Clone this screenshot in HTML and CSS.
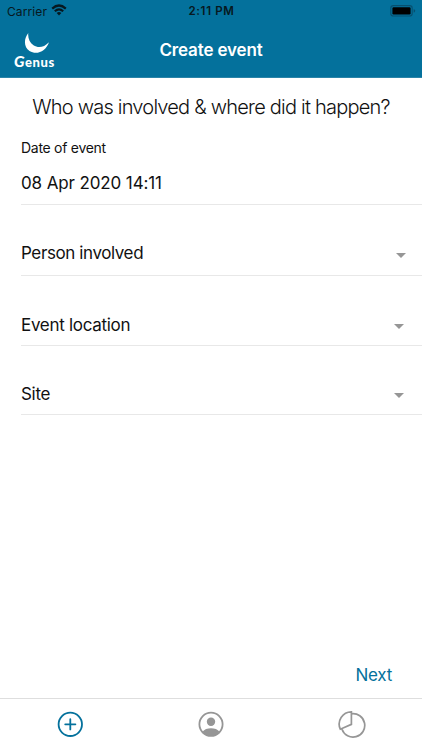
FILE: index.html
```html
<!DOCTYPE html>
<html lang="en">
<head>
<meta charset="utf-8">
<title>Create event</title>
<link rel="stylesheet" href="styles.css">
</head>
<body>
<div class="app">
  <header class="header">
    <div class="status">
      <div class="carrier"><span>Carrier</span>
        <svg width="16" height="12" viewBox="0 0 16 12" fill="none" stroke="#071820" stroke-width="2.2"><path d="M1.2 4.6Q8-1.6 14.8 4.6M3.8 7.3Q8 3.5 12.2 7.3"/><path d="M5.7 9Q8 7 10.3 9L8 11.4Z" fill="#071820" stroke="none"/></svg>
      </div>
      <span class="time">2:11 PM</span>
      <svg class="battery" width="26" height="12" viewBox="0 0 26 12"><rect x=".8" y=".6" width="21.4" height="10.4" rx="2.6" fill="none" stroke="#07506f" stroke-width="1.1"/><rect x="2.4" y="2.2" width="18.2" height="7.2" rx="1.2" fill="#000"/><path d="M23.7 4v3.7q1.5-.5 1.5-1.85T23.7 4Z" fill="#07506f"/></svg>
    </div>
    <div class="titlebar">
      <div class="logo">
        <svg width="26" height="21" viewBox="0 0 26 21"><path d="M4.3 0C-.5 6-.2 14.500 5.500 18C13 22.500 22 18 25 9.200C20 14.300 14.500 15.600 9.500 12.300C5.500 9.700 3.700 5 4.300 0Z" fill="#fff"/></svg>
        <span class="brand"><span class="cap">G</span>enus</span>
      </div>
      <h1 class="title">Create event</h1>
    </div>
  </header>
  <main class="main">
    <h2 class="question">Who was involved &amp; where did it happen?</h2>
    <div class="date">
      <div class="label">Date of event</div>
      <div class="value">08 Apr 2020 14:11</div>
    </div>
    <div class="field person"><span>Person involved</span><svg class="arrow" width="10" height="5" viewBox="0 0 10 5"><path d="M0 0H10L5 5Z"/></svg></div>
    <div class="field location"><span>Event location</span><svg class="arrow" width="10" height="5" viewBox="0 0 10 5"><path d="M0 0H10L5 5Z"/></svg></div>
    <div class="field site"><span>Site</span><svg class="arrow" width="10" height="5" viewBox="0 0 10 5"><path d="M0 0H10L5 5Z"/></svg></div>
    <div class="next">Next</div>
  </main>
  <nav class="tabs">
    <svg width="28" height="28" viewBox="0 0 28 28" fill="none" stroke="#04719c" stroke-width="1.8" stroke-linecap="round"><circle cx="14.300" cy="14.300" r="11.700"/><path d="M14.300 9.200v10.200M9.200 14.300h10.200"/></svg>
    <svg width="28" height="28" viewBox="0 0 28 28"><circle cx="14" cy="14.300" r="11.600" fill="none" stroke="#969696" stroke-width="1.8"/><circle cx="14" cy="11.800" r="4.200" fill="#969696"/><path d="M5.700 21.500C8.500 17 19.500 17 22.300 21.500Q19 25.900 14 25.900T5.700 21.500Z" fill="#969696"/></svg>
    <svg width="28" height="28" viewBox="0 0 28 28" fill="none" stroke="#969696" stroke-width="1.700"><path d="M13.400 1.800V14.400L2.300 19.200A12.300 12.300 0 0 1 13.400 1.800ZM13.400 3.800A11.700 11.700 0 1 1 4 19.200"/></svg>
  </nav>
</div>
</body>
</html>
```
FILE: styles.css
```css
* { box-sizing: border-box; }
body { margin: 0; background: #fff; color: #111; font-family: Inter, "Liberation Sans", sans-serif; }
.app { width: 422px; height: 750px; display: flex; flex-direction: column; overflow: hidden; }
h1, h2 { margin: 0; }
svg { display: block; }
.header { height: 78px; background: #04719c; border-bottom: 1px solid #2b84a8; }
.status { height: 22px; display: grid; grid-template-columns: 1fr auto 1fr; align-items: center; padding: 0 6px 0 7px; color: #071820; font-size: 12px; }
.carrier { display: flex; align-items: center; gap: 4px; letter-spacing: .1px; }
.carrier svg { margin-top: -2px; }
.time { font-size: 11.5px; font-weight: 600; letter-spacing: .65px; }
.battery { justify-self: end; margin-top: -1px; }
.titlebar { height: 55px; display: grid; grid-template-columns: 1fr auto 1fr; }
.logo { padding: 11px 0 0 14px; color: #fff; }
.logo svg { margin-left: 10px; }
.brand { display: block; margin-top: -1px; height: 16px; line-height: 16px; font-family: Lato, sans-serif; font-size: 13px; font-weight: 900; letter-spacing: .55px; white-space: nowrap; }
.cap { font-size: 15.5px; font-style: italic; }
.title { color: #fff; font-size: 17px; line-height: 56px; font-weight: 600; letter-spacing: -.15px; white-space: nowrap; }
.main { flex: 1; display: flex; flex-direction: column; }
.question { height: 58px; line-height: 58px; text-align: center; font-size: 20px; font-weight: 300; letter-spacing: -.78px; white-space: nowrap; }
.date { height: 69px; margin-left: 21px; border-bottom: 1px solid #e8e8e8; }
.label { font-size: 14px; line-height: 24px; letter-spacing: -.28px; }
.value { font-size: 17px; line-height: 46px; letter-spacing: -.12px; }
.field { margin-left: 21px; border-bottom: 1px solid #e8e8e8; display: flex; align-items: flex-end; justify-content: space-between; font-size: 17px; line-height: 24px; letter-spacing: -.3px; padding: 0 18px 8px 0; }
.person { height: 71px; padding: 0 16px 10px 0; letter-spacing: -.4px; }
.location { height: 70px; }
.site { height: 69px; }
.arrow { margin-bottom: 8px; fill: #969696; }
.person .arrow { margin-bottom: 7px; }
.next { margin: auto 30px 11px auto; color: #04719c; font-size: 17px; line-height: 24px; letter-spacing: -.25px; }
.tabs { height: 52px; border-top: 1px solid #dedede; display: grid; grid-template-columns: repeat(3, 1fr); justify-items: center; padding-top: 11px; }
```
